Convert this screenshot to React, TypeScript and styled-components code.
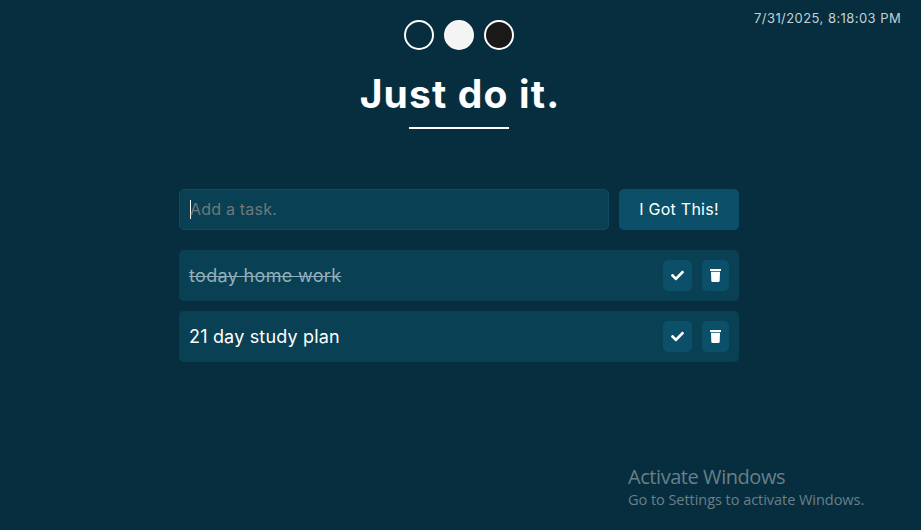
import React from 'react';
import styled, { createGlobalStyle, css } from 'styled-components';

const GlobalStyle = createGlobalStyle`
  * { box-sizing: border-box; }
  body {
    margin: 0;
    background: #062e3f;
    color: #fff;
    font-family: Inter, "Liberation Sans", sans-serif;
    overflow: hidden;
  }
  button { font-family: inherit; color: inherit; cursor: pointer; }
`;

const Page = styled.main`
  width: 918px;
  height: 530px;
  padding-top: 20px;
  display: flex;
  flex-direction: column;
  align-items: center;
`;

const Clock = styled.time`
  position: absolute;
  top: 10px;
  left: 754px;
  font-size: 13px;
  line-height: 17px;
  letter-spacing: 0.44px;
  white-space: nowrap;
  color: #c3d0d5;
`;

const Themes = styled.nav`
  display: flex;
  gap: 10px;
`;

const Swatch = styled.button<{ $color: string; $edge?: string }>`
  width: 30px;
  height: 30px;
  padding: 0;
  border: 2px solid ${p => p.$edge ?? '#fff'};
  border-radius: 50%;
  background: ${p => p.$color};
`;

const Title = styled.h1`
  height: 60px;
  margin: 14px 0 0;
  padding-left: 2px;
  font-size: 39px;
  line-height: 60px;
  font-weight: 700;
  letter-spacing: 1.15px;
  white-space: nowrap;
`;

const Rule = styled.div`
  width: 100px;
  height: 2px;
  margin-top: 3px;
  background: #fff;
`;

const Form = styled.form`
  width: 560px;
  height: 41px;
  margin-top: 60px;
  display: flex;
  gap: 10px;
`;

const Field = styled.div`
  width: 430px;
  padding-left: 10px;
  display: flex;
  align-items: center;
  border: 1px solid #0b4e64;
  border-radius: 5px;
  background: #0a4054;
`;

const Caret = styled.span`
  width: 1px;
  height: 19px;
  background: #fff;
`;

const Placeholder = styled.span`
  margin-left: -1px;
  padding-bottom: 1px;
  font-size: 16px;
  line-height: 20px;
  letter-spacing: 0.2px;
  color: #707877;
`;

const Submit = styled.button`
  width: 120px;
  padding: 0 0 1px;
  border: 0;
  border-radius: 5px;
  background: #0b5068;
  font-size: 16px;
  letter-spacing: 0.25px;
  white-space: nowrap;
`;

const List = styled.ul`
  width: 560px;
  margin: 20px 0 0;
  padding: 0;
  display: flex;
  flex-direction: column;
  gap: 10px;
  list-style: none;
`;

const Task = styled.li`
  height: 51px;
  padding: 0 10px;
  display: flex;
  align-items: center;
  border-radius: 5px;
  background: #0a4054;
`;

const TaskText = styled.span<{ $done?: boolean }>`
  flex: 1;
  padding-top: 1px;
  font-size: 18px;
  line-height: 24px;
  letter-spacing: 0.18px;
  white-space: nowrap;
  ${p => p.$done && css`
    letter-spacing: 0.33px;
    color: #8fb0bb;
    text-decoration: line-through;
    text-decoration-thickness: 1px;
  `}
`;

const IconButton = styled.button<{ $width: number }>`
  width: ${p => p.$width}px;
  height: 31px;
  margin-left: 10px;
  padding: 0;
  display: flex;
  align-items: center;
  justify-content: center;
  border: 0;
  border-radius: 5px;
  background: #0b5068;
`;

const Watermark = styled.aside`
  position: absolute;
  left: 628px;
  top: 464px;
  font-family: "Open Sans", "Noto Sans", sans-serif;
  color: #6b7f88;
  white-space: nowrap;
`;

const WatermarkTitle = styled.div`
  font-size: 20px;
  line-height: 26px;
  letter-spacing: -0.44px;
`;

const WatermarkText = styled.div`
  font-size: 14.5px;
  line-height: 19px;
  letter-spacing: -0.04px;
`;

const CheckIcon = () => (
  <svg width="13" height="13" viewBox="0 0 512 512" fill="#fff" aria-hidden="true">
    <path d="M173.9 439.4 7.5 273c-10-10-10-26.2 0-36.2l36.2-36.2c10-10 26.2-10 36.2 0L192 312.7 432.1 72.6c10-10 26.2-10 36.2 0l36.2 36.2c10 10 10 26.2 0 36.2L210.1 439.4c-10 10-26.2 10-36.2 0z" />
  </svg>
);

const TrashIcon = () => (
  <svg width="11" height="13" viewBox="0 0 11 13" fill="#fff" aria-hidden="true">
    <path d="M0 0h11v2H0zM1 2.8h9L9.7 11.8a1.3 1.3 0 0 1-1.3 1.2H2.6a1.3 1.3 0 0 1-1.3-1.2z" />
  </svg>
);

const tasks = [
  { text: 'today home work', done: true },
  { text: '21 day study plan', done: false },
];

export default function App() {
  return (
    <>
      <GlobalStyle />
      <Page>
        <Clock>7/31/2025, 8:18:03 PM</Clock>
        <Themes>
          <Swatch $color="#062e3f" />
          <Swatch $color="#f4f4f4" $edge="#f8f8f8" />
          <Swatch $color="#1b1918" />
        </Themes>
        <Title>Just do it.</Title>
        <Rule />
        <Form>
          <Field>
            <Caret />
            <Placeholder>Add a task.</Placeholder>
          </Field>
          <Submit type="button">I Got This!</Submit>
        </Form>
        <List>
          {tasks.map(task => (
            <Task key={task.text}>
              <TaskText $done={task.done}>{task.text}</TaskText>
              <IconButton $width={29}><CheckIcon /></IconButton>
              <IconButton $width={27}><TrashIcon /></IconButton>
            </Task>
          ))}
        </List>
      </Page>
      <Watermark>
        <WatermarkTitle>Activate Windows</WatermarkTitle>
        <WatermarkText>Go to Settings to activate Windows.</WatermarkText>
      </Watermark>
    </>
  );
}
